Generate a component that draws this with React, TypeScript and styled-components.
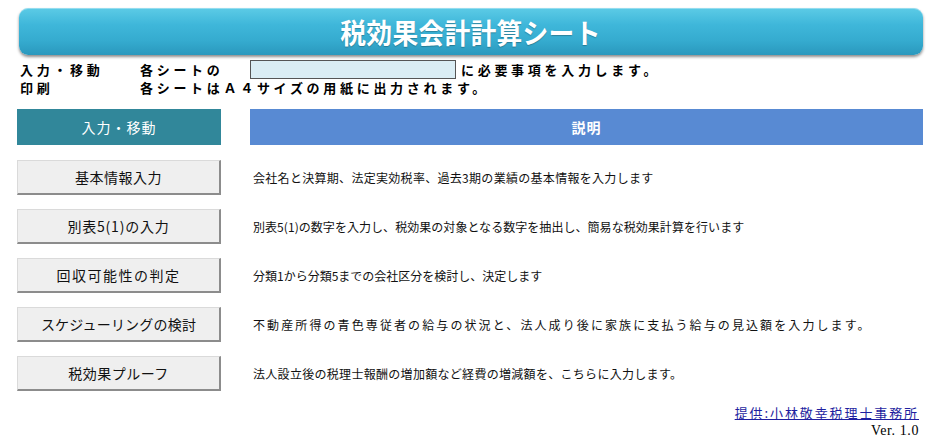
import React from 'react'
import styled, { createGlobalStyle } from 'styled-components'

const GlobalStyle = createGlobalStyle`
  html, body {
    margin: 0;
    padding: 0;
    background: #ffffff;
  }
  body {
    font-family: "Noto Sans CJK JP", "Noto Sans", sans-serif;
    color: #000;
  }
`

const Page = styled.div`
  width: 936px;
  height: 448px;
  box-sizing: border-box;
  padding: 8px 0 0 0;
  display: flex;
  flex-direction: column;
`

const TitleBar = styled.div`
  margin-left: 19px;
  width: 904px;
  height: 47px;
  border-radius: 9px;
  background: linear-gradient(to bottom, #5ccbe6 0%, #3fb7da 35%, #35abcf 70%, #2a98bd 100%);
  box-shadow: 0 2px 3px rgba(0, 0, 0, 0.45), inset 0 1px 0 rgba(255, 255, 255, 0.35);
  display: flex;
  align-items: center;
  justify-content: center;
`

const TitleText = styled.h1`
  margin: 0;
  font-size: 28px;
  font-weight: 700;
  color: #ffffff;
  letter-spacing: 0.3px;
  transform: scaleX(0.92);
  text-shadow: 0 1px 1px rgba(0, 0, 0, 0.25);
`

const Info = styled.div`
  margin-top: 5px;
  padding-left: 20px;
  display: grid;
  grid-template-columns: 120px 110px auto;
  align-items: center;
`

const InfoText = styled.span<{ $span?: number }>`
  font-size: 13px;
  font-weight: 700;
  letter-spacing: 3.7px;
  line-height: 17px;
  white-space: nowrap;
  grid-column: span ${(p) => p.$span ?? 1};
  display: flex;
  align-items: center;
`

const InputBox = styled.span`
  display: inline-block;
  width: 204px;
  height: 17px;
  border: 1px solid #555;
  background: #daedf4;
  margin-right: 5px;
`

const Table = styled.div`
  margin-top: 13px;
  padding-left: 17px;
  display: grid;
  grid-template-columns: 204px 673px;
  grid-template-rows: 36px repeat(5, 35px);
  column-gap: 29px;
  row-gap: 14px;
  align-items: center;
`

const HeadCell = styled.div<{ $bg: string }>`
  height: 36px;
  background: ${(p) => p.$bg};
  color: #ffffff;
  font-size: 14px;
  display: flex;
  align-items: center;
  justify-content: center;
  letter-spacing: 1px;
`

const NavButton = styled.button<{ $ls: number }>`
  height: 35px;
  margin-top: 2px;
  box-sizing: border-box;
  background: #efefef;
  border: 1px solid #dadada;
  border-right: 2px solid #8c8c8c;
  border-bottom: 2px solid #8c8c8c;
  font-family: "Noto Sans CJK JP", sans-serif;
  font-size: 14px;
  letter-spacing: ${(p) => p.$ls}px;
  color: #111;
  padding: 0;
  cursor: pointer;
`

const Desc = styled.p<{ $ls: number }>`
  margin: 2px 0 0 3px;
  font-size: 12px;
  letter-spacing: ${(p) => p.$ls}px;
  white-space: nowrap;
  color: #111;
`

const Footer = styled.div`
  margin-top: auto;
  padding: 0 17px 8px 0;
  display: flex;
  flex-direction: column;
  align-items: flex-end;
`

const Credit = styled.a`
  font-size: 13px;
  color: #1f1fa0;
  text-decoration: underline;
  letter-spacing: 1.9px;
  line-height: 18px;
`

const Version = styled.span`
  font-family: "Liberation Serif", serif;
  font-size: 14px;
  letter-spacing: 0.6px;
  line-height: 18px;
`

const rows = [
  { label: '基本情報入力', ls: 0.5, desc: '会社名と決算期、法定実効税率、過去3期の業績の基本情報を入力します', dls: 0.3 },
  { label: '別表5(1)の入力', ls: 0.8, desc: '別表5(1)の数字を入力し、税効果の対象となる数字を抽出し、簡易な税効果計算を行います', dls: 0.05 },
  { label: '回収可能性の判定', ls: 1.5, desc: '分類1から分類5までの会社区分を検討し、決定します', dls: 0 },
  { label: 'スケジューリングの検討', ls: 0.2, desc: '不動産所得の青色専従者の給与の状況と、法人成り後に家族に支払う給与の見込額を入力します。', dls: 2.1 },
  { label: '税効果プルーフ', ls: 0.5, desc: '法人設立後の税理士報酬の増加額など経費の増減額を、こちらに入力します。', dls: 0.3 },
]

export default function App() {
  return (
    <>
      <GlobalStyle />
      <Page>
        <TitleBar>
          <TitleText>税効果会計計算シート</TitleText>
        </TitleBar>
        <Info>
          <InfoText>入力・移動</InfoText>
          <InfoText>各シートの</InfoText>
          <InfoText>
            <InputBox />
            に必要事項を入力します。
          </InfoText>
          <InfoText>印刷</InfoText>
          <InfoText $span={2}>各シートはＡ４サイズの用紙に出力されます。</InfoText>
        </Info>
        <Table>
          <HeadCell $bg="#31879a">入力・移動</HeadCell>
          <HeadCell $bg="#588ad3">
            <b>説明</b>
          </HeadCell>
          {rows.map((r) => (
            <React.Fragment key={r.label}>
              <NavButton $ls={r.ls}>{r.label}</NavButton>
              <Desc $ls={r.dls}>{r.desc}</Desc>
            </React.Fragment>
          ))}
        </Table>
        <Footer>
          <Credit href="#">提供:小林敬幸税理士事務所</Credit>
          <Version>Ver. 1.0</Version>
        </Footer>
      </Page>
    </>
  )
}
